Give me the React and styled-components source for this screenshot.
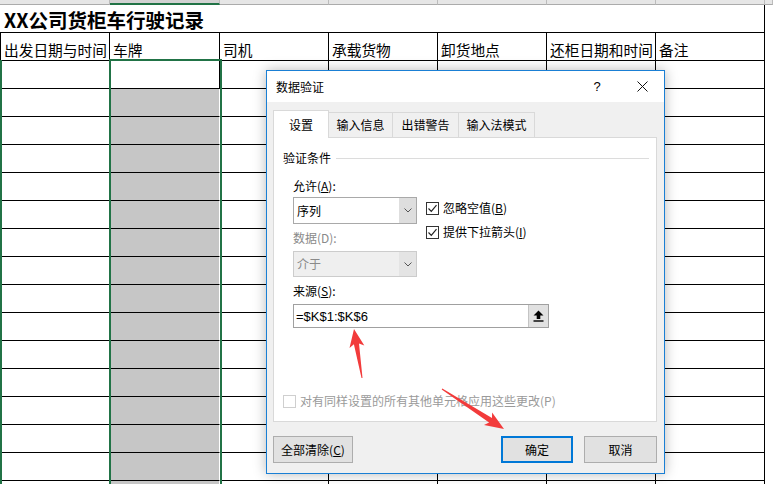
import React from "react";
import styled, { createGlobalStyle } from "styled-components";

const GlobalStyle = createGlobalStyle`
  html, body {
    margin: 0;
    padding: 0;
  }
  body {
    background: #fff;
    overflow: hidden;
    font-family: "Noto Sans CJK SC", "Noto Sans", sans-serif;
  }
`;

const COLS = "110px 110px 109px 109px 109px 109px 109px 1fr";
const headers = ["出发日期与时间", "车牌", "司机", "承载货物", "卸货地点", "还柜日期和时间", "备注"];
const ROWS = 16;

const Page = styled.div`
  position: relative;
  width: 773px;
  height: 484px;
  overflow: hidden;
  background: #fff;
`;

const ColumnStrip = styled.div`
  display: grid;
  grid-template-columns: ${COLS};
  height: 5px;
`;

const ColumnHead = styled.div`
  box-sizing: border-box;
  background: ${(p) => (p.$active ? "#d2d2d2" : "#e6e6e6")};
  border-right: 1px solid #bcbcbc;
  border-bottom: ${(p) => (p.$active ? "2px solid #217346" : "1px solid #ababab")};
`;

const Sheet = styled.div`
  display: grid;
  grid-template-columns: ${COLS};
  grid-auto-rows: 28px;
`;

const TitleCell = styled.div`
  grid-column: 1 / 8;
  box-sizing: border-box;
  border-right: 1px solid #000;
  border-bottom: 1px solid #000;
  display: flex;
  align-items: flex-end;
  padding: 0 0 0 4px;
  font-size: 19.5px;
  font-weight: 700;
  line-height: 24px;
  color: #000;
`;

const Cell = styled.div`
  box-sizing: border-box;
  border-right: 1px solid ${(p) => (p.$shaded ? "#fff" : "#000")};
  border-bottom: 1px solid #000;
  border-left: ${(p) => (p.$first ? "1px solid #000" : "none")};
  background: ${(p) => (p.$shaded ? "#c6c6c6" : "#fff")};
  display: flex;
  align-items: flex-end;
  padding: 0 0 1px 3px;
  font-size: 14.7px;
  line-height: 18px;
  color: #000;
  white-space: nowrap;
  overflow: hidden;
`;

const Spare = styled.div`
  background: #fff;
`;

const SelectionFrame = styled.div`
  position: absolute;
  left: 109px;
  top: 59px;
  width: 113px;
  bottom: 0;
  box-sizing: border-box;
  border: 2px solid #217346;
  border-bottom: none;
  pointer-events: none;
`;

const SelectionEdge = styled.div`
  position: absolute;
  left: 0;
  top: 60px;
  width: 2px;
  bottom: 0;
  background: #217346;
`;

/* dialog */

const Dialog = styled.div`
  position: absolute;
  left: 266px;
  top: 70px;
  width: 399px;
  box-sizing: border-box;
  border: 1px solid #1a7fd4;
  background: #f0f0f0;
  box-shadow: 0 0 12px rgba(0, 0, 0, 0.28);
  font-size: 12px;
  color: #000;
  display: flex;
  flex-direction: column;
`;

const TitleBar = styled.div`
  height: 31px;
  background: #fff;
  display: flex;
  align-items: center;
  padding-left: 9px;
  line-height: 16px;
`;

const TitleText = styled.span`
  flex: 1;
`;

const HelpButton = styled.span`
  width: 30px;
  margin-right: 8px;
  text-align: center;
  font-family: "Liberation Sans", Arial, sans-serif;
  font-size: 13px;
`;

const CloseButton = styled.span`
  width: 44px;
  display: flex;
  justify-content: center;
  align-items: center;
`;

const Body = styled.div`
  padding: 9px 7px 10px 6px;
  display: flex;
  flex-direction: column;
`;

const Tabs = styled.div`
  display: flex;
  align-items: flex-end;
  height: 27px;
  position: relative;
  z-index: 1;
  margin-bottom: -1px;
`;

const Tab = styled.div`
  box-sizing: border-box;
  width: ${(p) => p.$w}px;
  height: ${(p) => (p.$active ? 28 : 26)}px;
  margin-left: ${(p) => (p.$first ? 0 : -1)}px;
  border: 1px solid #d9d9d9;
  border-bottom: ${(p) => (p.$active ? "none" : "1px solid #d9d9d9")};
  background: ${(p) => (p.$active ? "#fff" : "#f0f0f0")};
  display: flex;
  justify-content: center;
  align-items: flex-end;
  padding-bottom: ${(p) => (p.$active ? 5 : 4)}px;
  line-height: 16px;
  white-space: nowrap;
`;

const Panel = styled.div`
  box-sizing: border-box;
  height: 285px;
  background: #fff;
  border: 1px solid #d9d9d9;
  padding: 12px 7px 12px 9px;
  display: flex;
  flex-direction: column;
`;

const GroupHeader = styled.div`
  display: flex;
  align-items: center;
  gap: 5px;
  height: 16px;
  line-height: 16px;
`;

const GroupLine = styled.div`
  flex: 1;
  height: 1px;
  background: #dcdcdc;
`;

const Label = styled.div`
  height: 16px;
  line-height: 16px;
  margin: ${(p) => p.$mt || 0}px 0 0 ${(p) => (p.$indent ? 10 : 0)}px;
  color: ${(p) => (p.$disabled ? "#8a8a8a" : "#000")};
`;

const U = styled.span`
  text-decoration: underline;
  text-underline-offset: 1px;
`;

const FieldRow = styled.div`
  display: flex;
  margin: 3px 0 0 10px;
`;

const LeftColumn = styled.div`
  width: 124px;
  display: flex;
  flex-direction: column;
`;

const RightColumn = styled.div`
  margin-left: 9px;
  padding-top: 3px;
  display: flex;
  flex-direction: column;
  gap: 8px;
`;

const SelectBox = styled.div`
  box-sizing: border-box;
  height: ${(p) => (p.$disabled ? 26 : 27)}px;
  margin-top: ${(p) => p.$mt || 0}px;
  border: 1px solid ${(p) => (p.$disabled ? "#cccccc" : "#a9a9a9")};
  background: ${(p) => (p.$disabled ? "#efefef" : "#fff")};
  display: flex;
  align-items: center;
  color: ${(p) => (p.$disabled ? "#8a8a8a" : "#000")};
`;

const SelectText = styled.span`
  flex: 1;
  padding-left: 3px;
  line-height: 16px;
`;

const DropButton = styled.span`
  width: 17px;
  height: 100%;
  background: ${(p) => (p.$disabled ? "#e4e4e4" : "#dedede")};
  display: flex;
  align-items: center;
  justify-content: center;
`;

const CheckRow = styled.label`
  display: flex;
  align-items: center;
  gap: 4px;
  height: 16px;
  line-height: 16px;
  white-space: nowrap;
  color: ${(p) => (p.$disabled ? "#9a9a9a" : "#000")};
`;

const Box = styled.span`
  box-sizing: border-box;
  width: 13px;
  height: 13px;
  border: 1px solid ${(p) => (p.$disabled ? "#cfcfcf" : "#333")};
  background: #fff;
  display: flex;
  align-items: center;
  justify-content: center;
`;

const SourceInput = styled.div`
  box-sizing: border-box;
  width: 256px;
  height: 24px;
  margin: 5px 0 0 10px;
  border: 1px solid #a0a0a0;
  background: #fff;
  display: flex;
  align-items: center;
`;

const SourceText = styled.span`
  flex: 1;
  padding-left: 2px;
  font-family: "Liberation Sans", Arial, sans-serif;
  font-size: 13px;
`;

const PickButton = styled.span`
  width: 19px;
  height: 100%;
  background: #e1e1e1;
  border-left: 1px solid #c4c4c4;
  display: flex;
  align-items: center;
  justify-content: center;
`;

const Footer = styled.div`
  margin-top: auto;
`;

const ButtonRow = styled.div`
  display: flex;
  margin-top: 14px;
`;

const Button = styled.div`
  box-sizing: border-box;
  width: ${(p) => p.$w}px;
  height: 27px;
  margin-left: ${(p) => p.$ml || 0};
  background: #e1e1e1;
  border: ${(p) => (p.$primary ? "2px solid #0078d7" : "1px solid #adadad")};
  display: flex;
  align-items: center;
  justify-content: center;
  line-height: 16px;
`;

const Overlay = styled.svg`
  position: absolute;
  left: 0;
  top: 0;
  pointer-events: none;
`;

function arrowPoints(tx, ty, px, py, head, half, neck, tail) {
  const dx = px - tx;
  const dy = py - ty;
  const len = Math.hypot(dx, dy);
  const ux = dx / len;
  const uy = dy / len;
  const nx = -uy;
  const ny = ux;
  const bx = px - ux * head;
  const by = py - uy * head;
  const bbx = bx - ux * 3;
  const bby = by - uy * 3;
  const pts = [
    [tx + nx * tail, ty + ny * tail],
    [bx + nx * neck, by + ny * neck],
    [bbx + nx * half, bby + ny * half],
    [px, py],
    [bbx - nx * half, bby - ny * half],
    [bx - nx * neck, by - ny * neck],
    [tx - nx * tail, ty - ny * tail],
  ];
  return pts.map((p) => p[0].toFixed(1) + "," + p[1].toFixed(1)).join(" ");
}

const Chevron = () => (
  <svg width="8" height="5" viewBox="0 0 8 5">
    <path d="M0.5 0.5 L4 4 L7.5 0.5" fill="none" stroke="#555" strokeWidth="1" />
  </svg>
);

const Check = ({ checked, disabled }) => (
  <Box $disabled={disabled}>
    {checked && (
      <svg width="11" height="11" viewBox="0 0 11 11">
        <path d="M1.5 5.5 L4.3 8.3 L9.5 2.2" fill="none" stroke="#222" strokeWidth="1.2" />
      </svg>
    )}
  </Box>
);

function Spreadsheet() {
  const cells = [];
  for (let r = 0; r < ROWS; r++) {
    for (let c = 0; c < 7; c++) {
      cells.push(<Cell key={r + "-" + c} $first={c === 0} $shaded={c === 1 && r > 0} />);
    }
    cells.push(<Spare key={r + "-s"} />);
  }
  return (
    <>
      <ColumnStrip>
        {[0, 1, 2, 3, 4, 5, 6, 7].map((i) => (
          <ColumnHead key={i} $active={i === 1} />
        ))}
      </ColumnStrip>
      <Sheet>
        <TitleCell>XX公司货柜车行驶记录</TitleCell>
        <Spare />
        {headers.map((h, i) => (
          <Cell key={h} $first={i === 0}>
            {h}
          </Cell>
        ))}
        <Spare />
        {cells}
      </Sheet>
      <SelectionEdge />
      <SelectionFrame />
    </>
  );
}

function ValidationDialog() {
  const tabs = [
    { t: "设置", w: 56 },
    { t: "输入信息", w: 65 },
    { t: "出错警告", w: 67 },
    { t: "输入法模式", w: 77 },
  ];
  return (
    <Dialog>
      <TitleBar>
        <TitleText>数据验证</TitleText>
        <HelpButton>?</HelpButton>
        <CloseButton>
          <svg width="11" height="11" viewBox="0 0 11 11">
            <path d="M0.5 0.5 L10.5 10.5 M10.5 0.5 L0.5 10.5" stroke="#111" strokeWidth="1" />
          </svg>
        </CloseButton>
      </TitleBar>
      <Body>
        <Tabs>
          {tabs.map((tab, i) => (
            <Tab key={tab.t} $w={tab.w} $first={i === 0} $active={i === 0}>
              {tab.t}
            </Tab>
          ))}
        </Tabs>
        <Panel>
          <GroupHeader>
            验证条件
            <GroupLine />
          </GroupHeader>
          <Label $mt={12} $indent>
            允许(<U>A</U>):
          </Label>
          <FieldRow>
            <LeftColumn>
              <SelectBox>
                <SelectText>序列</SelectText>
                <DropButton>
                  <Chevron />
                </DropButton>
              </SelectBox>
              <Label $mt={6} $disabled>
                数据(D):
              </Label>
              <SelectBox $disabled $mt={5}>
                <SelectText>介于</SelectText>
                <DropButton $disabled>
                  <Chevron />
                </DropButton>
              </SelectBox>
            </LeftColumn>
            <RightColumn>
              <CheckRow>
                <Check checked />
                <span>
                  忽略空值(<U>B</U>)
                </span>
              </CheckRow>
              <CheckRow>
                <Check checked />
                <span>
                  提供下拉箭头(<U>I</U>)
                </span>
              </CheckRow>
            </RightColumn>
          </FieldRow>
          <Label $mt={6} $indent>
            来源(<U>S</U>):
          </Label>
          <SourceInput>
            <SourceText>=$K$1:$K$6</SourceText>
            <PickButton>
              <svg width="11" height="12" viewBox="0 0 11 12">
                <path d="M5.5 0.5 L10.5 5.5 H7.3 V9 H3.7 V5.5 H0.5 Z" fill="#000" />
                <rect x="0.5" y="10.3" width="10" height="1.4" fill="#000" />
              </svg>
            </PickButton>
          </SourceInput>
          <Footer>
            <CheckRow $disabled>
              <Check disabled />
              <span>对有同样设置的所有其他单元格应用这些更改(P)</span>
            </CheckRow>
          </Footer>
        </Panel>
        <ButtonRow>
          <Button $w={80}>
            全部清除(<U>C</U>)
          </Button>
          <Button $w={72} $ml="auto" $primary>
            确定
          </Button>
          <Button $w={73} $ml="11px">
            取消
          </Button>
        </ButtonRow>
      </Body>
    </Dialog>
  );
}

export default function App() {
  return (
    <Page>
      <GlobalStyle />
      <Spreadsheet />
      <ValidationDialog />
      <Overlay width="773" height="484" viewBox="0 0 773 484">
        <polygon points={arrowPoints(362, 378, 354, 329, 15, 7.5, 2.6, 0.5)} fill="#f23b3b" />
        <polygon points={arrowPoints(442, 389, 504, 429, 16, 7.5, 2.6, 0.5)} fill="#f23b3b" />
      </Overlay>
    </Page>
  );
}
